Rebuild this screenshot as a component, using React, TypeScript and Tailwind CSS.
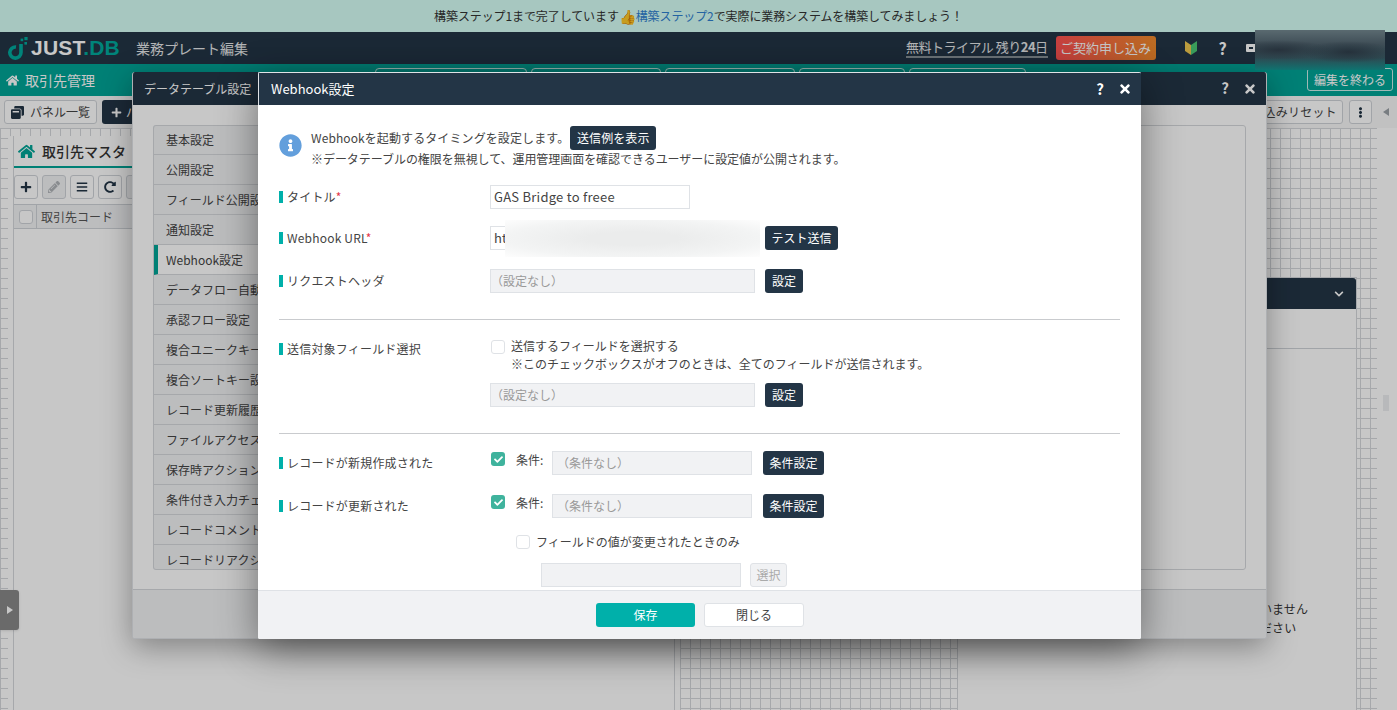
import type { ReactNode } from 'react';
import { FaBars, FaCheck, FaChevronDown, FaEllipsisV, FaHome, FaInfoCircle, FaPencilAlt, FaPlus, FaRedoAlt, FaTimes, FaWindowRestore } from 'react-icons/fa';

const FONT = { fontFamily: '"Noto Sans CJK JP", "Noto Sans", sans-serif' };

const tabs = [152, 130, 130, 106, 117];
const menu = ['基本設定', '公開設定', 'フィールド公開設定', '通知設定', 'Webhook設定', 'データフロー自動化', '承認フロー設定', '複合ユニークキー設定', '複合ソートキー設定', 'レコード更新履歴', 'ファイルアクセス', '保存時アクション', '条件付き入力チェック', 'レコードコメント', 'レコードリアクション'];

function Logo() {
  return (
    <div className="flex items-center">
      <svg width="20" height="24" viewBox="0 0 20 24" fill="none" className="shrink-0">
        <path d="M8 11 A5.6 5.6 0 1 0 13 16.5 L13 8" stroke="#00a99d" strokeWidth="3.6" />
        <rect x="16.4" y="1" width="3.2" height="3.2" fill="#00a99d" />
        <rect x="16.4" y="6" width="2.6" height="2.6" fill="#00a99d" />
        <rect x="12.6" y="2.6" width="2.6" height="2.6" fill="#00a99d" />
      </svg>
      <span className="ml-[3px] text-[21px] font-bold tracking-[0.2px] text-white" style={{ fontFamily: '"Liberation Sans", sans-serif' }}>
        JUST<span className="text-[#00a99d]">.DB</span>
      </span>
    </div>
  );
}

function NavBar() {
  return (
    <header className="flex h-8 shrink-0 items-center bg-[#233546] pl-2 text-[#e6e8ea]">
      <Logo />
      <span className="ml-[16px] text-[14px]">業務プレート編集</span>
      <span className="ml-[658px] border-b-2 border-[#8a949c] text-[13px] leading-[18px] tracking-[-0.5px]">無料トライアル 残り<b>24</b>日</span>
      <button type="button" className="ml-2 h-6 w-[100px] rounded-[3px] bg-[linear-gradient(90deg,#ff5252,#f08a2c)] text-[13px] text-white">ご契約申し込み</button>
      <svg width="12" height="16" viewBox="0 0 12 16" className="ml-[29px]">
        <path d="M0 1 L6 5 V15 L0 11Z" fill="#f0c850" />
        <path d="M12 1 L6 5 V15 L12 11Z" fill="#4bc873" />
      </svg>
      <span className="ml-[22px] text-[16px] font-bold text-white">?</span>
      <span className="ml-[19px] h-2 w-[10px] rounded-[1px] border-[3px] border-white" />
    </header>
  );
}

function TealBar() {
  return (
    <div className="flex h-8 shrink-0 bg-[#00a497] pl-[6px] pr-1 text-white">
      <div className="flex h-full w-[369px] items-center gap-[6px]">
        <FaHome className="text-[13px]" />
        <span className="text-[14px]">取引先管理</span>
      </div>
      <div className="flex gap-1 pt-1">
        {tabs.map((w, i) => (
          <div key={i} className="h-7 rounded-t-[4px] border border-white/80" style={{ width: w }} />
        ))}
      </div>
      <button type="button" className="ml-auto mt-1 h-[23px] w-[86px] rounded-[3px] border border-white/80 text-[12px]">編集を終わる</button>
    </div>
  );
}

function ToolBar() {
  return (
    <div className="flex h-8 shrink-0 items-center bg-[#f8f8f8] pl-1 pr-[8px] text-[#444]">
      <button type="button" className="flex h-6 w-[93px] items-center justify-center gap-[6px] rounded-[3px] border border-[#cfd3d8] bg-white text-[12px]">
        <FaWindowRestore className="text-[13px] text-[#233546]" />
        パネル一覧
      </button>
      <button type="button" className="ml-[5px] flex h-6 w-[90px] items-center gap-1 rounded-[3px] bg-[#233546] pl-[9px] text-[12px] text-white">
        <FaPlus className="text-[11px]" />
        パネル追加
      </button>
      <button type="button" className="ml-auto h-6 w-[110px] rounded-[3px] border border-[#cfd3d8] bg-white text-[12px] tracking-[0.2px]">絞り込みリセット</button>
      <button type="button" className="ml-[6px] flex h-6 w-[23px] items-center justify-center rounded-[3px] border border-[#cfd3d8] bg-white">
        <FaEllipsisV className="text-[11px] text-[#233546]" />
      </button>
      <span className="ml-[11px] h-0 w-0 border-y-[4px] border-r-[6px] border-y-transparent border-r-[#9aa0a6]" />
    </div>
  );
}

function ToolButton({ children, off }: { children: ReactNode; off?: boolean }) {
  return (
    <span className={`flex h-6 w-6 items-center justify-center rounded-[3px] border border-[#cfd3d8] text-[12px] ${off ? 'bg-[#f1f2f4] text-[#b0b4b8]' : 'bg-white text-[#233546]'}`}>
      {children}
    </span>
  );
}

function Canvas() {
  return (
    <div className="flex min-h-0 flex-1">
      <div className="flex flex-1 bg-white pl-2 pt-2 [background-image:linear-gradient(#d5d8dc_1px,transparent_1px),linear-gradient(90deg,#d5d8dc_1px,transparent_1px)] [background-size:10px_10px]">
        <section className="h-[600px] w-[672px] shrink-0 rounded-[3px] bg-white px-[5px]">
          <div className="h-full border-x border-[#d5d8dc]">
            <div className="flex h-[32px] items-center gap-[7px] border-b-2 border-[#00a497] pl-1">
              <FaHome className="text-[17px] text-[#00a497]" />
              <span className="text-[14px] font-medium text-[#333]">取引先マスタ</span>
            </div>
            <div className="flex gap-[4px] pt-[7px]">
              <ToolButton><FaPlus /></ToolButton>
              <ToolButton off><FaPencilAlt /></ToolButton>
              <ToolButton><FaBars /></ToolButton>
              <ToolButton><FaRedoAlt /></ToolButton>
              <ToolButton off> </ToolButton>
            </div>
            <div className="mt-[5px] flex h-[25px] items-center border-y border-[#cfd3d8] bg-[#f1f2f4] text-[12px] text-[#555]">
              <span className="ml-[5px] h-[14px] w-[14px] rounded-[3px] border border-[#cfd3d8] bg-white" />
              <span className="ml-[3px] border-l border-[#cfd3d8] pl-[4px] leading-6">取引先コード</span>
            </div>
          </div>
        </section>
        <section className="ml-[277px] mt-[141px] h-[600px] w-[400px] shrink-0 border border-[#d5d8dc] bg-white">
          <div className="flex h-[31px] items-center justify-end rounded-tr-[3px] bg-[#233546] pr-[12px] text-[#fff]">
            <FaChevronDown className="text-[10px]" />
          </div>
          <div className="h-10 border-b border-[#cfd3d8]" />
          <div className="mt-[250px] pl-[302px] text-[12px] leading-[19px] tracking-[0.1px] text-[#333]">
            <p className="whitespace-nowrap">いません</p>
            <p className="whitespace-nowrap">ださい</p>
          </div>
        </section>
      </div>
      <div className="relative w-[20px] shrink-0 bg-white">
        <span className="absolute left-[6px] top-[267px] h-4 w-[6px] bg-[#eceef0]" />
      </div>
    </div>
  );
}

function TableSettingsDialog() {
  return (
    <div className="absolute left-[132px] top-[72px] flex h-[567px] w-[1135px] flex-col overflow-hidden rounded-[3px] border border-t-0 border-[#dfe2e6] bg-white shadow-[0_8px_30px_rgba(0,0,0,0.35)]">
      <div className="flex h-[33px] shrink-0 items-center bg-[#233546] pl-[11px] pr-[9px] text-white">
        <span className="text-[12px]">データテーブル設定</span>
        <span className="ml-auto text-[15px] font-bold">?</span>
        <FaTimes className="ml-[14px] text-[14px]" />
      </div>
      <div className="flex min-h-0 flex-1 gap-[20px] px-[20px] pt-[20px]">
        <nav className="h-[445px] w-[220px] shrink-0 overflow-hidden rounded-[3px] border border-t-0 border-[#d5d8dc] bg-[#f1f2f4] text-[12px] text-[#444] shadow-[inset_0_1px_0_#d5d8dc]">
          {menu.map((m) => (
            <div key={m} className={`flex h-[30px] shrink-0 items-center whitespace-nowrap border-b border-[#d5d8dc] ${m === 'Webhook設定' ? 'border-l-4 border-l-[#00a497] bg-white pl-2' : 'pl-3'}`}>
              {m}
            </div>
          ))}
        </nav>
        <div className="h-[445px] flex-1 rounded-[3px] border border-[#d5d8dc]" />
      </div>
      <div className="h-[49px] shrink-0 border-t border-[#d5d8dc] bg-[#f1f2f4]" />
    </div>
  );
}

function Label({ text, required, top }: { text: string; required?: boolean; top?: string }) {
  return (
    <div className={`flex w-[211px] shrink-0 items-center gap-[4px] text-[12px] leading-[18px] tracking-[0.2px] text-[#444] ${top ?? ''}`}>
      <span className="h-3 w-1 shrink-0 bg-[#00b0aa]" />
      <span>{text}{required && <span className="text-[#e4394a]">*</span>}</span>
    </div>
  );
}

function ReadOnly({ text, className }: { text?: string; className: string }) {
  return (
    <div className={`flex h-6 items-center border border-[#dfe2e6] bg-[#f1f2f4] text-[12px] text-[#999] ${className}`}>{text}</div>
  );
}

function DarkButton({ children, className }: { children: ReactNode; className: string }) {
  return (
    <button type="button" className={`flex h-6 items-center justify-center rounded-[3px] bg-[#233546] text-[12px] text-white ${className}`}>{children}</button>
  );
}

function Check({ on, className }: { on?: boolean; className?: string }) {
  return on ? (
    <span className={`flex h-[14px] w-[14px] shrink-0 items-center justify-center rounded-[3px] bg-[#3fb39d] text-[9px] text-white ${className ?? ''}`}><FaCheck /></span>
  ) : (
    <span className={`h-[14px] w-[14px] shrink-0 rounded-[3px] border border-[#dfe2e6] bg-white ${className ?? ''}`} />
  );
}

function ConditionRow({ text, top }: { text: string; top: string }) {
  return (
    <div className={`flex ${top}`}>
      <Label text={text} top="mt-[3px] self-start" />
      <Check on className="ml-[1px] mt-[1px]" />
      <span className="ml-[11px] w-[36px] text-[12px] leading-[18px] text-[#444]">条件:</span>
      <ReadOnly text="（条件なし）" className="w-[200px] pl-1" />
      <DarkButton className="ml-[11px] w-[61px]">条件設定</DarkButton>
    </div>
  );
}

function WebhookDialog() {
  return (
    <div className="absolute left-[258px] top-[72px] flex h-[567px] w-[883px] flex-col overflow-hidden rounded-[2px] bg-white shadow-[0_10px_40px_rgba(0,0,0,0.45)]">
      <div className="flex h-[33px] shrink-0 items-center border-l border-t border-[#dfe2e6] bg-[#233546] pl-3 pr-[9px] text-white">
        <span className="text-[13px]">Webhook設定</span>
        <span className="ml-auto text-[15px] font-bold">?</span>
        <FaTimes className="ml-[14px] text-[14px]" />
      </div>
      <div className="relative min-h-0 flex-1 overflow-hidden px-[21px] pt-[21px] text-[#444]">
        <div className="flex">
          <FaInfoCircle className="mt-[8px] shrink-0 text-[23px] text-[#639fdc]" />
          <div className="ml-[9px] text-[12px] tracking-[0.1px]">
            <div className="flex h-6 items-center">
              <span>Webhookを起動するタイミングを設定します。</span>
              <DarkButton className="ml-[1px] w-[86px]">送信例を表示</DarkButton>
            </div>
            <p className="leading-[18px] tracking-[-0.05px]">※データテーブルの権限を無視して、運用管理画面を確認できるユーザーに設定値が公開されます。</p>
          </div>
        </div>
        <div className="mt-[17px] flex items-center">
          <Label text="タイトル" required />
          <div className="flex h-6 w-[200px] items-center border border-[#dfe2e6] pl-[3px] text-[13px] tracking-[0.25px]">GAS Bridge to freee</div>
        </div>
        <div className="mt-[17px] flex items-center">
          <Label text="Webhook URL" required />
          <div className="flex h-6 w-[265px] items-center border border-[#dfe2e6] pl-[3px] text-[13px]">ht</div>
          <DarkButton className="ml-[10px] w-[73px]">テスト送信</DarkButton>
        </div>
        <div className="mt-[19px] flex items-center">
          <Label text="リクエストヘッダ" />
          <ReadOnly text="（設定なし）" className="w-[265px]" />
          <DarkButton className="ml-[10px] w-[38px]">設定</DarkButton>
        </div>
        <hr className="mt-[26px] border-[#c9cbce]" />
        <div className="mt-[19px] flex">
          <Label text="送信対象フィールド選択" top="mt-[1px] self-start" />
          <div>
            <div className="flex text-[12px] leading-[18px]">
              <Check className="ml-[1px] mt-[1px]" />
              <p className="ml-[6px] mt-[-2px]">送信するフィールドを選択する<br />※このチェックボックスがオフのときは、全てのフィールドが送信されます。</p>
            </div>
            <div className="mt-[10px] flex">
              <ReadOnly text="（設定なし）" className="w-[265px]" />
              <DarkButton className="ml-[10px] w-[38px]">設定</DarkButton>
            </div>
          </div>
        </div>
        <hr className="mt-[26px] border-[#c9cbce]" />
        <ConditionRow text="レコードが新規作成された" top="mt-[17px]" />
        <ConditionRow text="レコードが更新された" top="mt-[19px]" />
        <div className="ml-[237px] mt-[15px] flex items-center text-[12px] leading-[18px]">
          <Check />
          <span className="ml-[6px]">フィールドの値が変更されたときのみ</span>
        </div>
        <div className="ml-[262px] mt-[12px] flex">
          <ReadOnly className="w-[200px]" />
          <button type="button" className="ml-[9px] h-6 w-[37px] rounded-[3px] border border-[#dfe2e6] bg-[#f1f2f4] text-[12px] text-[#aaa]">選択</button>
        </div>
        {/* URL redaction */}
        <div className="absolute left-[247px] top-[115px] h-[37px] w-[255px] bg-[radial-gradient(ellipse_at_center,#ebecec_25%,#f3f4f4_70%,#fdfdfd_100%)]" />
      </div>
      <div className="flex h-[49px] shrink-0 items-center justify-center gap-[9px] border-t border-[#dfe2e6] bg-[#f1f2f4] pl-[1px]">
        <button type="button" className="h-6 w-[99px] rounded-[3px] bg-[#00b0aa] text-[12px] text-white">保存</button>
        <button type="button" className="h-6 w-[100px] rounded-[3px] border border-[#dfe2e6] bg-white text-[12px] text-[#444]">閉じる</button>
      </div>
    </div>
  );
}

export default function App() {
  return (
    <div className="relative flex h-[710px] w-[1397px] flex-col overflow-hidden bg-white" style={FONT}>
      <div className="flex h-8 shrink-0 items-center justify-center bg-[#d6fff6] text-[12px] tracking-[-0.1px] text-[#333]">
        構築ステップ1まで完了しています<span className="text-[14px] leading-none">👍</span><span className="text-[#2f80d0]">構築ステップ2</span>で実際に業務システムを構築してみましょう！
      </div>
      <NavBar />
      <TealBar />
      <ToolBar />
      <Canvas />
      <div className="absolute left-0 top-[590px] flex h-10 w-[19px] items-center justify-center rounded-r-[3px] bg-[#888] shadow">
        <span className="h-0 w-0 border-y-[4px] border-l-[6px] border-y-transparent border-l-white" />
      </div>
      <TableSettingsDialog />
      <div className="absolute inset-0 bg-black/[0.22]" />
      <WebhookDialog />
      {/* account name redaction */}
      <div className="absolute left-[1255px] top-[30px] h-10 w-[130px] bg-[radial-gradient(ellipse_at_18%_50%,#27323c,transparent_35%),radial-gradient(ellipse_at_72%_55%,#25313b,transparent_35%),linear-gradient(180deg,#5a6a70,#3f4e57_35%,#2e4a52_70%,#0f7370)]" />
    </div>
  );
}
